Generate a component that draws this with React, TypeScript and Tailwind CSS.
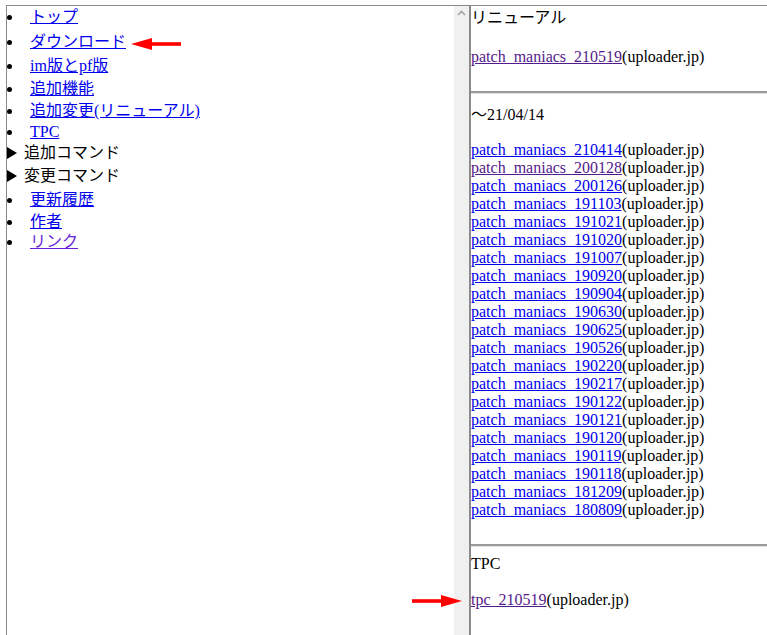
import React from 'react';

type MenuItem =
  | { kind: 'link'; label: string; h: number; visited?: boolean }
  | { kind: 'toggle'; label: string; h: number };

const MENU: MenuItem[] = [
  { kind: 'link', label: 'トップ', h: 25 },
  { kind: 'link', label: 'ダウンロード', h: 24 },
  { kind: 'link', label: 'im版とpf版', h: 23 },
  { kind: 'link', label: '追加機能', h: 22 },
  { kind: 'link', label: '追加変更(リニューアル)', h: 21 },
  { kind: 'link', label: 'TPC', h: 21 },
  { kind: 'toggle', label: '追加コマンド', h: 23 },
  { kind: 'toggle', label: '変更コマンド', h: 24 },
  { kind: 'link', label: '更新履歴', h: 22 },
  { kind: 'link', label: '作者', h: 20 },
  { kind: 'link', label: 'リンク', h: 22, visited: true },
];

const OLD_BUILDS = [
  '210414', '200128', '200126', '191103', '191021', '191020', '191007',
  '190920', '190904', '190630', '190625', '190526', '190220', '190217',
  '190122', '190121', '190120', '190119', '190118', '181209', '180809',
];

const VISITED = new Set(['200128']);

const Rule = ({ className }: { className: string }) => (
  <div className={className}>
    <div className="h-[2px] bg-[#9a9a9a]" />
    <div className="h-[1px] bg-[#e2e2e2]" />
  </div>
);

const Download = ({ name, visited }: { name: string; visited?: boolean }) => (
  <div className="leading-[18px] whitespace-nowrap">
    <a href="#" className={visited ? 'text-[#551a8b] underline' : 'text-[#0000ee] underline'}>
      {name}
    </a>
    (uploader.jp)
  </div>
);

const Arrow = ({ className, flip }: { className: string; flip?: boolean }) => (
  <svg
    className={className}
    width="50"
    height="12"
    viewBox="0 0 50 12"
    style={flip ? { transform: 'scaleX(-1)' } : undefined}
  >
    <rect x="0" y="4.2" width="32" height="3.6" fill="#f00" />
    <polygon points="29,0 50,6 29,12" fill="#f00" />
  </svg>
);

export default function App() {
  return (
    <div
      className="relative w-[767px] h-[635px] overflow-hidden bg-white text-black text-[16px]"
      style={{ fontFamily: '"Liberation Serif", "Noto Sans CJK JP", serif' }}
    >
      <div className="mt-[5px] ml-[6px] flex h-[630px] border-t border-l border-[#8a8a8a]">
        {/* menu frame */}
        <div className="w-[447px] shrink-0">
          <ul>
            {MENU.map((item) => (
              <li key={item.label} className="flex items-start leading-[22px]" style={{ height: item.h }}>
                {item.kind === 'link' ? (
                  <>
                    <span className="w-[23px] h-[22px] flex items-center">
                      <span className="block w-[5px] h-[5px] rounded-full bg-black" />
                    </span>
                    <a
                      href="#"
                      className={item.visited ? 'text-[#6a1fd8] underline' : 'text-[#0000ee] underline'}
                    >
                      {item.label}
                    </a>
                  </>
                ) : (
                  <>
                    <span className="w-[17px] h-[22px] flex items-center">
                      <svg width="10" height="12" viewBox="0 0 10 12">
                        <polygon points="0,0 10,6 0,12" fill="#000" />
                      </svg>
                    </span>
                    <span>{item.label}</span>
                  </>
                )}
              </li>
            ))}
          </ul>
        </div>

        {/* scrollbar track */}
        <div className="w-[15px] shrink-0 bg-[#f0f0f0] flex justify-center pt-[4px]">
          <svg width="9" height="6" viewBox="0 0 9 6" className="ml-[-1px]">
            <path d="M1 5L4.5 1.5L8 5" stroke="#a3a3a3" strokeWidth="1.6" fill="none" />
          </svg>
        </div>
        <div className="w-[2px] shrink-0 bg-[#8a8a8a]" />

        {/* downloads frame */}
        <div className="flex-1 min-w-0">
          <div className="mt-[1px] leading-[22px]">リニューアル</div>
          <div className="mt-[19px]">
            <Download name="patch_maniacs_210519" visited />
          </div>
          <Rule className="mt-[25px]" />

          <div className="mt-[10px] leading-[22px]">～21/04/14</div>
          <div className="mt-[15px]">
            {OLD_BUILDS.map((d) => (
              <Download key={d} name={`patch_maniacs_${d}`} visited={VISITED.has(d)} />
            ))}
          </div>
          <Rule className="mt-[25px]" />

          <div className="mt-[8px] leading-[18px]">TPC</div>
          <div className="mt-[18px]">
            <Download name="tpc_210519" visited />
          </div>
        </div>
      </div>

      <Arrow className="absolute left-[131px] top-[38px]" flip />
      <Arrow className="absolute left-[412px] top-[595px]" />
    </div>
  );
}
